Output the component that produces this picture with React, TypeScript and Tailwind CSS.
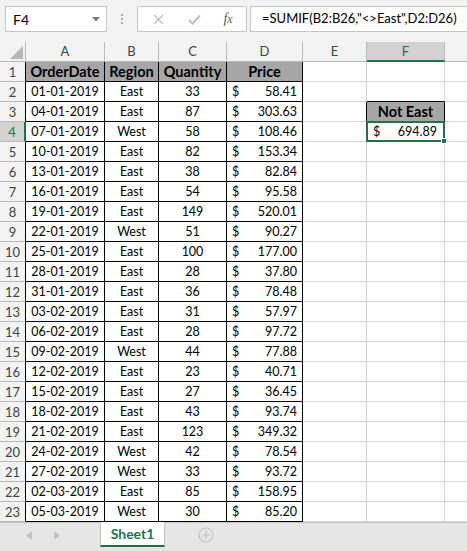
import React from "react";

const rows: [string, string, string, string][] = [
  ["01-01-2019", "East", "33", "58.41"],
  ["04-01-2019", "East", "87", "303.63"],
  ["07-01-2019", "West", "58", "108.46"],
  ["10-01-2019", "East", "82", "153.34"],
  ["13-01-2019", "East", "38", "82.84"],
  ["16-01-2019", "East", "54", "95.58"],
  ["19-01-2019", "East", "149", "520.01"],
  ["22-01-2019", "West", "51", "90.27"],
  ["25-01-2019", "East", "100", "177.00"],
  ["28-01-2019", "East", "28", "37.80"],
  ["31-01-2019", "East", "36", "78.48"],
  ["03-02-2019", "East", "31", "57.97"],
  ["06-02-2019", "East", "28", "97.72"],
  ["09-02-2019", "West", "44", "77.88"],
  ["12-02-2019", "East", "23", "40.71"],
  ["15-02-2019", "East", "27", "36.45"],
  ["18-02-2019", "East", "43", "93.74"],
  ["21-02-2019", "East", "123", "349.32"],
  ["24-02-2019", "West", "42", "78.54"],
  ["27-02-2019", "West", "33", "93.72"],
  ["02-03-2019", "East", "85", "158.95"],
  ["05-03-2019", "West", "30", "85.20"],
];

const font = { fontFamily: "Lato, 'Noto Sans', sans-serif" };

function Toolbar() {
  return (
    <div className="h-[42px] flex items-start pt-[6px] pl-[5px] shrink-0">
      <div className="w-[102px] h-[26px] bg-white border border-[#c6c6c6] flex items-center justify-between pl-[7px] pr-[6px] text-[14px] text-black">
        <span>F4</span>
        <svg width="8" height="5" viewBox="0 0 8 5">
          <polygon points="0,0 8,0 4,4.5" fill="#7a7a7a" />
        </svg>
      </div>
      <div className="w-[30px] h-[26px] flex flex-col items-center justify-center gap-[2px]">
        <div className="w-[2px] h-[2px] bg-[#b0b0b0]" />
        <div className="w-[2px] h-[2px] bg-[#b0b0b0]" />
        <div className="w-[2px] h-[2px] bg-[#b0b0b0]" />
      </div>
      <div className="w-[110px] h-[26px] bg-white border border-[#c6c6c6] flex items-center">
        <div className="w-[40px] flex justify-center">
          <svg width="11" height="11" viewBox="0 0 11 11">
            <path d="M1 1 L10 10 M10 1 L1 10" stroke="#bdbdbd" strokeWidth="1.3" />
          </svg>
        </div>
        <div className="w-[32px] flex justify-center">
          <svg width="13" height="11" viewBox="0 0 13 11">
            <path d="M1 6 L4.5 9.5 L12 1.5" stroke="#bdbdbd" strokeWidth="2" fill="none" />
          </svg>
        </div>
        <div className="flex-1 flex justify-center">
          <span
            className="italic text-[14px] text-[#5f5f5f] leading-none"
            style={{ fontFamily: "'Liberation Serif', serif" }}
          >
            f<span className="text-[12px]">x</span>
          </span>
        </div>
      </div>
      <div className="ml-[3px] flex-1 h-[26px] bg-white border border-[#c6c6c6] border-r-0 flex items-center pl-[11px] text-[13px] text-black whitespace-nowrap overflow-hidden">
        =SUMIF(B2:B26,"&lt;&gt;East",D2:D26)
      </div>
    </div>
  );
}

function HeaderRow() {
  const cols: [string, string][] = [
    ["A", "w-[79px]"],
    ["B", "w-[54px]"],
    ["C", "w-[68px]"],
    ["D", "w-[76px]"],
    ["E", "w-[64px]"],
  ];
  return (
    <div className="flex h-[20px] shrink-0 text-[13px] text-[#444444]">
      <div className="w-[26px] h-[20px] border-r border-b border-[#bababa] bg-[#f3f3f3] flex items-end justify-end pr-[2px] pb-[2px]">
        <svg width="13" height="13" viewBox="0 0 13 13">
          <polygon points="13,0 13,13 0,13" fill="#b8b8b8" />
        </svg>
      </div>
      {cols.map(([l, w]) => (
        <div
          key={l}
          className={`${w} h-[20px] border-r border-b border-[#bababa] bg-[#f3f3f3] flex items-center justify-center pt-[1px]`}
        >
          {l}
        </div>
      ))}
      <div className="w-[78px] h-[20px] border-r border-[#bababa] border-b-2 border-b-[#217346] bg-[#d2d2d2] flex items-center justify-center pt-[1px] text-[#217346]">
        F
      </div>
      <div className="flex-1 h-[20px] border-b border-[#bababa] bg-[#f3f3f3]" />
    </div>
  );
}

function RowHeader({ n, sel }: { n: number; sel?: boolean }) {
  return sel ? (
    <div className="w-[26px] h-[20px] bg-[#d2d2d2] border-b border-[#bababa] border-r-2 border-r-[#217346] flex items-center justify-center pt-[2px] text-[13px] text-[#217346]">
      {n}
    </div>
  ) : (
    <div className="w-[26px] h-[20px] bg-[#f3f3f3] border-b border-[#bababa] border-r border-r-black flex items-center justify-center pt-[2px] text-[13px] text-[#444444]">
      {n}
    </div>
  );
}

function DataRow({ n, r }: { n: number; r: [string, string, string, string] }) {
  const cell = "h-[20px] border-r border-b border-black flex items-center pt-[2px] bg-white";
  const gcell = "h-[20px] border-r border-b border-[#d4d4d4] bg-white";
  return (
    <div className="flex h-[20px] shrink-0 text-[12.5px] text-black">
      <RowHeader n={n} sel={n === 4} />
      <div className={`${cell} w-[79px] justify-center`}>{r[0]}</div>
      <div className={`${cell} w-[54px] justify-center`}>{r[1]}</div>
      <div className={`${cell} w-[68px] justify-center`}>{r[2]}</div>
      <div className={`${cell} w-[76px] justify-between pl-[5px] pr-[5px]`}>
        <span>$</span>
        <span>{r[3]}</span>
      </div>
      {n === 3 ? (
        <>
          <div className="h-[20px] w-[64px] border-r border-b border-[#d4d4d4] border-r-black bg-white" />
          <div className="h-[20px] w-[78px] border-r border-b border-black bg-[#a6a6a6] flex items-center justify-center pt-[1px] font-bold text-[14.5px]">
            Not East
          </div>
        </>
      ) : n === 4 ? (
        <>
          <div className={`${gcell} w-[64px]`} />
          <div className="relative h-[20px] w-[78px] border-r border-b border-[#d4d4d4] bg-white flex items-center pt-[2px] justify-between pl-[6px] pr-[7px]">
            <span>$</span>
            <span>694.89</span>
            <div className="absolute -left-[1px] -top-[1px] -right-[1px] -bottom-[1px] border-2 border-[#217346]" />
            <div className="absolute -right-[3px] -bottom-[3px] w-[6px] h-[6px] bg-[#217346] border border-white" />
          </div>
        </>
      ) : (
        <>
          <div className={`${gcell} w-[64px]`} />
          <div className={`${gcell} w-[78px] ${n === 2 ? "border-b-black" : ""}`} />
        </>
      )}
      <div className="flex-1 h-[20px] border-b border-[#d4d4d4] bg-white" />
    </div>
  );
}

function HeadRow() {
  const cell =
    "h-[20px] border-r border-b border-black flex items-center justify-center pt-[1px] bg-[#a6a6a6] font-bold";
  const gcell = "h-[20px] border-r border-b border-[#d4d4d4] bg-white";
  return (
    <div className="flex h-[20px] shrink-0 text-[14.5px] text-black">
      <RowHeader n={1} />
      <div className={`${cell} w-[79px]`}>OrderDate</div>
      <div className={`${cell} w-[54px]`}>Region</div>
      <div className={`${cell} w-[68px]`}>Quantity</div>
      <div className={`${cell} w-[76px]`}>Price</div>
      <div className={`${gcell} w-[64px]`} />
      <div className={`${gcell} w-[78px]`} />
      <div className="flex-1 h-[20px] border-b border-[#d4d4d4] bg-white" />
    </div>
  );
}

function TabBar() {
  return (
    <div className="flex-1 bg-[#e6e6e6] border-t border-[#c3c3c3] flex items-start">
      <div className="w-[100px] h-[25px] flex items-center">
        <svg width="6" height="9" viewBox="0 0 6 9" className="ml-[26px]">
          <polygon points="6,0 6,9 0,4.5" fill="#c4c4c4" />
        </svg>
        <svg width="6" height="9" viewBox="0 0 6 9" className="ml-[22px]">
          <polygon points="0,0 0,9 6,4.5" fill="#c4c4c4" />
        </svg>
      </div>
      <div className="-mt-[1px] w-[65px] h-[25px] bg-white border-x border-[#c3c3c3] border-b-2 border-b-[#217346] flex items-center justify-center text-[14px] font-bold text-[#217346]">
        Sheet1
      </div>
      <div className="h-[24px] flex items-center pl-[33px]">
        <svg width="16" height="16" viewBox="0 0 16 16">
          <circle cx="8" cy="8" r="7" fill="none" stroke="#c4c4c4" strokeWidth="1.2" />
          <path d="M8 4 V12 M4 8 H12" stroke="#c4c4c4" strokeWidth="1.2" />
        </svg>
      </div>
    </div>
  );
}

export default function App() {
  return (
    <div
      className="w-[467px] h-[551px] bg-[#f3f3f3] overflow-hidden flex flex-col"
      style={font}
    >
      <Toolbar />
      <HeaderRow />
      <HeadRow />
      {rows.map((r, i) => (
        <DataRow key={i} n={i + 2} r={r} />
      ))}
      <TabBar />
    </div>
  );
}
